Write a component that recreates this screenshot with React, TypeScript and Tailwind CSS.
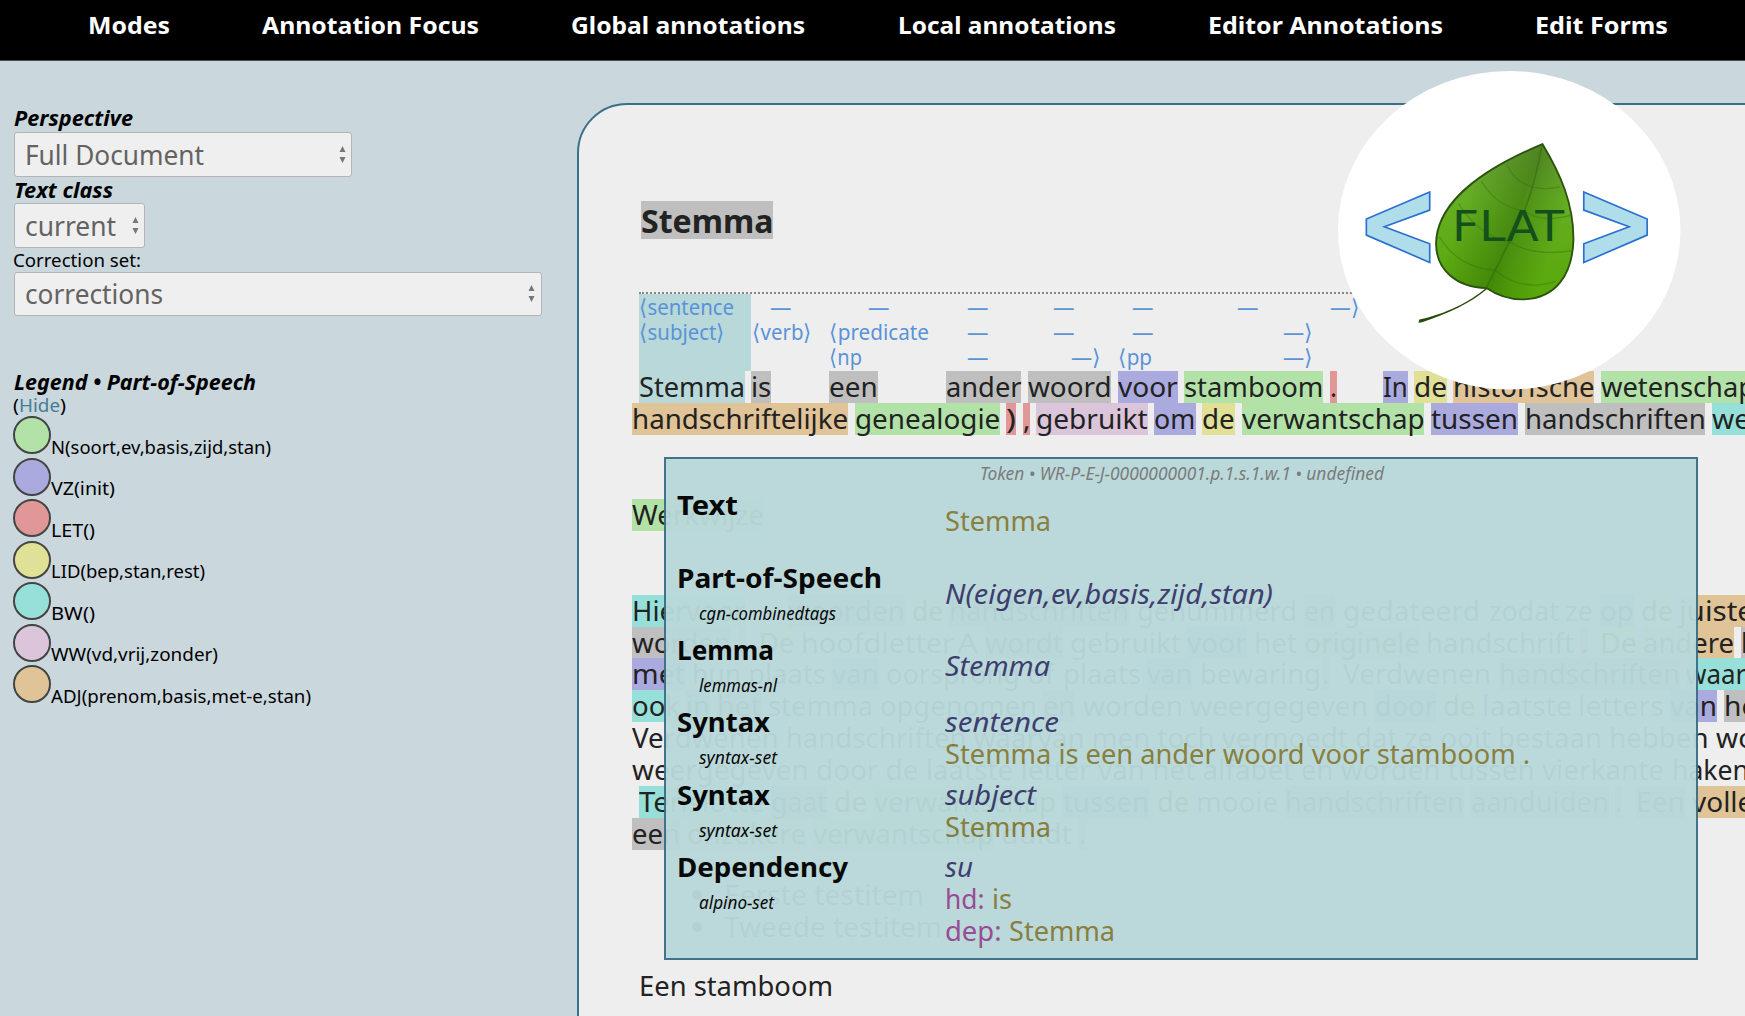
import { useLayoutEffect, useRef } from 'react';

/* Text that is stretched or condensed horizontally to an exact width. */
function Fit({ w, className = '', children }: { w: number; className?: string; children: string }) {
  const ref = useRef<HTMLSpanElement>(null);
  useLayoutEffect(() => {
    const el = ref.current;
    if (el && el.offsetWidth > 0) {
      el.style.transform = 'none';
      const natural = el.getBoundingClientRect().width;
      el.style.transform = `scaleX(${w / natural})`;
    }
  }, [w, children]);
  return (
    <span className={`block shrink-0 whitespace-pre ${className}`} style={{ width: w }}>
      <span ref={ref} className="inline-block origin-left">
        {children}
      </span>
    </span>
  );
}

const tag = {
  n: 'bg-[#b3e2a9]',
  vz: 'bg-[#aaaadf]',
  let: 'bg-[#e09797]',
  lid: 'bg-[#e0e097]',
  bw: 'bg-[#97e0da]',
  ww: 'bg-[#dac5da]',
  adj: 'bg-[#e0c397]',
  gray: 'bg-[#bfbfbf]',
  sel: 'bg-[#b8d8d9]',
  none: '',
};
type Tag = keyof typeof tag;
/* start, end, text, tag, optional text width */
type Word = [number, number, string, Tag, number?];

const ORIGIN = 632;

function Row({ words, className = 'h-[31.9px] leading-8' }: { words: Word[]; className?: string }) {
  let end = ORIGIN;
  return (
    <div className={`flex ${className}`}>
      {words.map(([a, b, text, t, tw], i) => {
        const gap = a - end;
        end = b;
        return (
          <span key={i} className={`block h-full shrink-0 ${tag[t]}`} style={{ marginLeft: gap, width: b - a }}>
            {text && <Fit w={tw ?? b - a}>{text}</Fit>}
          </span>
        );
      })}
    </div>
  );
}

const spans: Word[][] = [
  [
    [638.5, 751, '⟨sentence', 'sel', 95],
    [769.5, 791, '—', 'none'],
    [868, 889.5, '—', 'none'],
    [967, 988.5, '—', 'none'],
    [1053, 1074.5, '—', 'none'],
    [1132, 1153.5, '—', 'none'],
    [1237, 1258.5, '—', 'none'],
    [1329.5, 1359, '—⟩', 'none'],
  ],
  [
    [638.5, 751, '⟨subject⟩', 'sel', 86],
    [751.5, 811.5, '⟨verb⟩', 'none'],
    [829, 929, '⟨predicate', 'none'],
    [967, 988.5, '—', 'none'],
    [1053, 1074.5, '—', 'none'],
    [1132, 1153.5, '—', 'none'],
    [1283, 1313, '—⟩', 'none'],
  ],
  [
    [638.5, 751, '', 'sel'],
    [829, 862, '⟨np', 'none'],
    [967, 988.5, '—', 'none'],
    [1071, 1101, '—⟩', 'none'],
    [1118, 1152, '⟨pp', 'none'],
    [1283, 1313, '—⟩', 'none'],
  ],
];

const intro: Word[][] = [
  [
    [638.5, 744.5, 'Stemma', 'sel'],
    [751, 771.3, 'is', 'gray'],
    [829, 877.7, 'een', 'gray'],
    [946, 1021.5, 'ander', 'gray'],
    [1028, 1111.5, 'woord', 'gray'],
    [1118, 1177.7, 'voor', 'vz'],
    [1184, 1323.4, 'stamboom', 'n'],
    [1330, 1337, '.', 'let'],
    [1383, 1407.7, 'In', 'vz'],
    [1414, 1447, 'de', 'lid'],
    [1453, 1594.5, 'historische', 'adj'],
    [1601, 1755, 'wetenschap', 'n'],
  ],
  [
    [632, 848.2, 'handschriftelijke', 'adj'],
    [854.7, 1000, 'genealogie', 'n'],
    [1006.3, 1016.2, ')', 'let'],
    [1022.7, 1030, ',', 'let'],
    [1036.5, 1148.2, 'gebruikt', 'ww'],
    [1154.5, 1195.7, 'om', 'vz'],
    [1202.3, 1235, 'de', 'lid'],
    [1241.8, 1424.4, 'verwantschap', 'n'],
    [1431, 1518, 'tussen', 'vz'],
    [1524.6, 1705.3, 'handschriften', 'gray'],
    [1712, 1823, 'werden', 'bw', 100],
  ],
];

const body: Word[][] = [
  [
    [632, 745, 'Hiervoor', 'bw'],
    [788, 905, 'woorden', 'gray'],
    [912, 943, 'de', 'lid'],
    [949, 1129, 'handschriften', 'gray'],
    [1137, 1297, 'genummerd', 'none'],
    [1304, 1335, 'en', 'gray'],
    [1343, 1480, 'gedateerd', 'none'],
    [1489, 1559, 'zodat', 'none'],
    [1565, 1593, 'ze', 'none'],
    [1600, 1634, 'op', 'vz'],
    [1641, 1673, 'de', 'lid'],
    [1679, 1754, 'juiste', 'adj'],
  ],
  [
    [632, 731, 'worden', 'gray'],
    [738, 746, '.', 'let'],
    [759, 794, 'De', 'lid'],
    [801, 954, 'hoofdletter', 'none'],
    [957, 978, 'A', 'none'],
    [985, 1063, 'wordt', 'gray'],
    [1070, 1181, 'gebruikt', 'none'],
    [1187, 1247, 'voor', 'vz'],
    [1254, 1297, 'het', 'none'],
    [1304, 1420, 'originele', 'adj'],
    [1426, 1574, 'handschrift', 'none'],
    [1580, 1588, '.', 'let'],
    [1600, 1637, 'De', 'lid'],
    [1643, 1734, 'andere', 'adj'],
    [1740.5, 1800, 'hoofd', 'gray', 75],
  ],
  [
    [632, 685, 'met', 'vz'],
    [692, 741, 'hun', 'none'],
    [748, 826, 'plaats', 'none'],
    [832, 879, 'van', 'vz'],
    [886, 1020, 'oorsprong', 'none'],
    [1027, 1055, 'of', 'none'],
    [1063, 1141, 'plaats', 'none'],
    [1147, 1192, 'van', 'vz'],
    [1200, 1321, 'bewaring', 'none'],
    [1322, 1329, '.', 'let'],
    [1343, 1491, 'Verdwenen', 'none'],
    [1499, 1680, 'handschriften', 'gray'],
    [1686, 1790, 'waarvan', 'bw'],
  ],
  [
    [632, 680, 'ook', 'bw'],
    [686, 710, 'in', 'vz'],
    [717, 761, 'het', 'gray'],
    [768, 873, 'stemma', 'none'],
    [880, 1037, 'opgenomen', 'none'],
    [1043, 1075, 'en', 'gray'],
    [1083, 1183, 'worden', 'none'],
    [1190, 1368, 'weergegeven', 'none'],
    [1375, 1436, 'door', 'vz'],
    [1443, 1475, 'de', 'lid'],
    [1482, 1572, 'laatste', 'none'],
    [1578, 1664, 'letters', 'none'],
    [1670, 1717, 'van', 'vz'],
    [1723.5, 1767, 'het', 'gray'],
  ],
  [
    [632, 1708.5, 'Verdwenen handschriften waarvan men toch vermoedt dat ze ooit bestaan hebben', 'none'],
    [1716, 1817, 'worden', 'none'],
  ],
  [
    [632, 1664, 'weergegeven door de laatste letter van het alfabet en worden tussen vierkante', 'none'],
    [1672, 1749, 'haken', 'none'],
  ],
  [
    [638.5, 764, 'Tenslotte', 'bw'],
    [771, 827, 'gaat', 'gray'],
    [834, 867, 'de', 'lid'],
    [874, 1056, 'verwantschap', 'n'],
    [1063, 1149, 'tussen', 'vz'],
    [1157, 1189, 'de', 'lid'],
    [1196, 1278, 'mooie', 'none'],
    [1285, 1464, 'handschriften', 'gray'],
    [1471, 1609, 'aanduiden', 'gray'],
    [1615, 1622, '.', 'let'],
    [1636, 1685, 'Een', 'gray'],
    [1692, 1795, 'volledig', 'adj'],
  ],
  [
    [632, 680, 'een', 'gray'],
    [687, 806, 'onzekere', 'adj'],
    [813, 994, 'verwantschap', 'n'],
    [1001, 1072, 'duidt', 'none'],
    [1079, 1086, '.', 'let'],
  ],
];

const menu: [string, number][] = [
  ['Modes', 82],
  ['Annotation Focus', 217],
  ['Global annotations', 234],
  ['Local annotations', 218],
  ['Editor Annotations', 235],
  ['Edit Forms', 133],
];

const legend: [string, number, Tag][] = [
  ['N(soort,ev,basis,zijd,stan)', 220, 'n'],
  ['VZ(init)', 64, 'vz'],
  ['LET()', 44, 'let'],
  ['LID(bep,stan,rest)', 154, 'lid'],
  ['BW()', 44, 'bw'],
  ['WW(vd,vrij,zonder)', 167, 'ww'],
  ['ADJ(prenom,basis,met-e,stan)', 260, 'adj'],
];

function Select({ label, w, className }: { label: string; w: number; className: string }) {
  return (
    <div
      className={`flex h-[44.5px] items-center justify-between rounded-[3px] border border-[#b4b4b4] bg-[#efefef] pr-[5.5px] pl-[9.5px] ${className}`}
    >
      <Fit w={w} className="pt-px text-[27px] leading-10 text-[#636363]">
        {label}
      </Fit>
      <svg width="7" height="17" viewBox="0 0 7 17" fill="#777">
        <path d="M3.5 0L6.5 6H.5zM3.5 17L.5 11h6z" />
      </svg>
    </div>
  );
}

type Part = [string, number, string];
const gold = 'text-[#857b38]';
const navy = 'italic text-[#38386a]';
const purple = 'text-[#944692]';
const details: { label: string; lw: number; set?: string; sw?: number; lines: Part[][] }[] = [
  { label: 'Text', lw: 61, lines: [[['Stemma', 106, gold]]] },
  {
    label: 'Part-of-Speech',
    lw: 205,
    set: 'cgn-combinedtags',
    sw: 137,
    lines: [[['N(eigen,ev,basis,zijd,stan)', 328, navy]]],
  },
  { label: 'Lemma', lw: 97, set: 'lemmas-nl', sw: 78, lines: [[['Stemma', 105, navy]]] },
  {
    label: 'Syntax',
    lw: 93,
    set: 'syntax-set',
    sw: 78,
    lines: [[['sentence', 114, navy]], [['Stemma is een ander woord voor stamboom .', 585, gold]]],
  },
  {
    label: 'Syntax',
    lw: 93,
    set: 'syntax-set',
    sw: 78,
    lines: [[['subject', 91, navy]], [['Stemma', 106, gold]]],
  },
  {
    label: 'Dependency',
    lw: 171,
    set: 'alpino-set',
    sw: 75,
    lines: [
      [['su', 28, navy]],
      [
        ['hd:', 39.5, purple],
        ['is', 20, gold],
      ],
      [
        ['dep:', 56.5, purple],
        ['Stemma', 106, gold],
      ],
    ],
  },
];

function Popup() {
  return (
    <div className="absolute top-[457px] left-[664px] h-[502.500px] w-[1034px] border-2 border-[#3b7087] bg-[#b9d9da] pl-[11px] opacity-96">
      <div className="flex h-[30.400px] justify-center pr-[10px] text-[18px] leading-[28px] text-[#777] italic">
        <Fit w={404}>Token • WR-P-E-J-0000000001.p.1.s.1.w.1 • undefined</Fit>
      </div>
      {details.map((d, i) => (
        <div key={i} className="flex h-[72.3px]">
          <div className="w-[268px]">
            <Fit w={d.lw} className="h-8 text-[27.5px] leading-8 font-bold text-black">
              {d.label}
            </Fit>
            {d.set && (
              <Fit w={d.sw ?? 0} className="ml-[22px] text-[17.5px] leading-[39px] text-black italic">
                {d.set}
              </Fit>
            )}
          </div>
          <div className={`flex flex-col text-[27.500px] leading-8 ${d.lines.length === 1 ? 'pt-4' : ''}`}>
            {d.lines.map((line, j) => (
              <div key={j} className="flex h-8 gap-[7px]">
                {line.map(([t, w, c]) => (
                  <Fit key={t} w={w} className={c}>
                    {t}
                  </Fit>
                ))}
              </div>
            ))}
          </div>
        </div>
      ))}
    </div>
  );
}

function Logo() {
  return (
    <svg
      className="absolute top-[71px] left-[1338px] h-[318.500px] w-[342.500px]"
      viewBox="24 3 1027 955"
      preserveAspectRatio="none"
    >
      <defs>
        <linearGradient id="leaf" x1="0" y1="0" x2="0" y2="1">
          <stop offset="0" stopColor="#6c9f3c" />
          <stop offset="0.35" stopColor="#66ae24" />
          <stop offset="1" stopColor="#57a808" />
        </linearGradient>
        <linearGradient id="fold" gradientUnits="userSpaceOnUse" x1="385" y1="440" x2="715" y2="560">
          <stop offset="0" stopColor="#255c00" stopOpacity="0" />
          <stop offset="0.46" stopColor="#255c00" stopOpacity="0.42" />
          <stop offset="0.56" stopColor="#255c00" stopOpacity="0.28" />
          <stop offset="0.85" stopColor="#255c00" stopOpacity="0" />
        </linearGradient>
      </defs>
      <ellipse cx="537.5" cy="480.5" rx="513.5" ry="477.5" fill="#fff" />
      <g fill="#afdde9" stroke="#2a6fd2" strokeWidth="5">
        <path d="M299 366V420L163 470L299 521V577L109 495V447Z" />
        <path d="M761 366V420L897 470L761 521V577L951 495V447Z" />
      </g>
      <path
        d="M466 655C420 695 345 732 268 748L265 758L276 756C350 733 425 697 472 656Z"
        fill="#264a08"
      />
      <path
        d="M637 222C690 310 731 400 730 510C727 610 680 687 575 688C530 688 500 675 469 654C380 652 318 600 318 520C320 400 450 300 637 222Z"
        fill="url(#leaf)"
      />
      <path
        d="M637 222C690 310 731 400 730 510C727 610 680 687 575 688C530 688 500 675 469 654C380 652 318 600 318 520C320 400 450 300 637 222Z"
        fill="url(#fold)"
        stroke="#2c5210"
        strokeWidth="5.500"
      />
      <g fill="none" stroke="#326b12" strokeOpacity="0.38" strokeWidth="4">
        <path d="M635 230C612 350 590 420 538 515C510 570 490 610 469 652" strokeWidth="5" strokeOpacity="0.6" />
        <path d="M530 284C555 335 600 370 690 350" />
        <path d="M454 334C490 390 530 415 582 422C620 450 670 450 720 436" />
        <path d="M385 400C430 470 480 505 538 515C590 548 660 552 724 542" />
        <path d="M328 500C370 570 430 596 495 600C550 648 610 655 678 634" />
      </g>
      <text
        x="366"
        y="514"
        fontFamily="DejaVu Sans"
        fontSize="128"
        textLength="336"
        lengthAdjust="spacingAndGlyphs"
        fill="#13501c"
      >
        FLAT
      </text>
    </svg>
  );
}

export default function App() {
  return (
    <div className="relative h-[1016px] w-[1745px] overflow-hidden bg-[#cad7dd] font-['Noto_Sans','Open_Sans',sans-serif] text-[#222]">
      <nav className="flex h-[61px] gap-[92.4px] border-b border-[#4a4f52] bg-black pl-[87.500px] text-[24px] leading-[49px] font-bold text-white">
        {menu.map(([t, w]) => (
          <Fit key={t} w={w}>
            {t}
          </Fit>
        ))}
      </nav>
      <div className="flex">
        <aside className="w-[577px] shrink-0 pt-[43px] pl-[14px] text-black">
          <Fit w={119} className="h-7 text-[20.5px] leading-[29px] font-bold italic">
            Perspective
          </Fit>
          <Select label="Full Document" w={179} className="w-[338px]" />
          <Fit w={99} className="h-[26.500px] text-[20.5px] leading-[26px] font-bold italic">
            Text class
          </Fit>
          <Select label="current" w={91} className="w-[131px]" />
          <Fit w={128} className="-ml-px h-[24px] text-[18.5px] leading-[23px]">
            Correction set:
          </Fit>
          <Select label="corrections" w={138} className="w-[527.500px]" />
          <Fit w={242} className="mt-[53px] h-[29px] text-[20.5px] leading-[27px] font-bold italic">
            Legend • Part-of-Speech
          </Fit>
          <div className="-mt-px -ml-px flex h-[19px] text-[18.5px] leading-[16px]">
            <Fit w={6}>(</Fit>
            <Fit w={41} className="text-[#457d95]">
              Hide
            </Fit>
            <Fit w={6}>)</Fit>
          </div>
          <ul className="-ml-px">
            {legend.map(([t, w, c]) => (
              <li key={t} className="flex h-[41.550px] items-start">
                <span className={`size-[38px] rounded-full border-2 border-[#444] ${tag[c]}`} />
                <Fit w={w} className="pt-[18.500px] text-[18.5px] leading-[24px]">
                  {t}
                </Fit>
              </li>
            ))}
          </ul>
        </aside>
        <main className="mt-[42px] h-[960px] w-[1250px] shrink-0 rounded-tl-[50px] border-2 border-[#3b7087] bg-[#eee] pt-24 pl-[53px] text-[27.5px]">
          <h1 className="ml-[8.500px] h-[38px] w-[132.500px] bg-[#bfbfbf] text-[32px] leading-[39px] font-bold">
            <Fit w={132.5}>Stemma</Fit>
          </h1>
          <div className="mt-[53px] text-[21.5px] text-[#5a93d8]">
            <div className="ml-[6.500px] h-0.5 w-[760px] border-t-2 border-dotted border-[#888] bg-[#eee]" />
            <Row words={spans[0]} className="h-[25px] leading-[26px]" />
            <Row words={spans[1]} className="h-[25px] leading-[25px]" />
            <Row words={spans[2]} className="h-[27px] leading-[26px]" />
          </div>
          {intro.map((words, i) => (
            <Row key={i} words={words} className="h-8 leading-8" />
          ))}
          <h2 className="mt-16">
            <Row words={[[632, 764, 'Werkwijze', 'n']]} />
          </h2>
          <div className="mt-[63.800px]">
            {body.map((words, i) => (
              <Row key={i} words={words} />
            ))}
          </div>
          <ul className="mt-[29px] ml-[60px] leading-8">
            {([['Eerste testitem', 200], ['Tweede testitem', 218]] as [string, number][]).map(([t, w]) => (
              <li key={t} className="flex h-8 items-center">
                <span className="mr-[22px] size-[10px] rounded-full bg-[#222]" />
                <Fit w={w}>{t}</Fit>
              </li>
            ))}
          </ul>
          <p className="mt-[27px] ml-[6.500px] leading-8">
            <Fit w={194}>Een stamboom</Fit>
          </p>
        </main>
      </div>
      <Popup />
      <Logo />
    </div>
  );
}
